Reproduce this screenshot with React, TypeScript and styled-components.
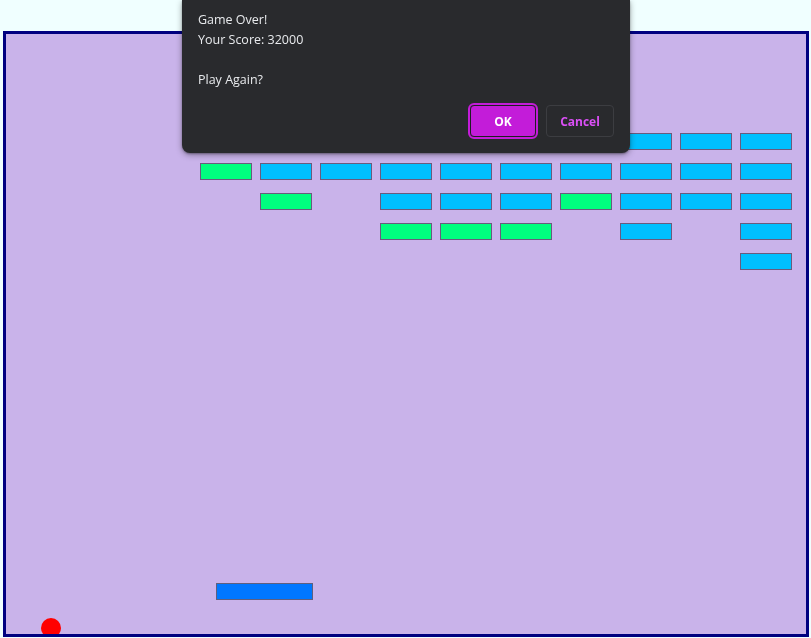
import React from "react";
import styled, { createGlobalStyle } from "styled-components";

const Global = createGlobalStyle`
  html, body { margin: 0; padding: 0; background: #f0ffff; }
  body { font-family: "Open Sans", "Noto Sans", sans-serif; }
`;

const Page = styled.div`
  width: 811px;
  height: 638px;
  display: flex;
  justify-content: center;
  padding-top: 31px;
  box-sizing: border-box;
  overflow: hidden;
`;

const Board = styled.div`
  position: relative;
  width: 800px;
  height: 600px;
  flex: none;
  border: 3px solid #000080;
  background: #c9b3ea;
  overflow: hidden;
`;

const BrickGrid = styled.div`
  display: grid;
  grid-template-columns: repeat(10, 52px);
  grid-auto-rows: 17px;
  column-gap: 8px;
  row-gap: 13px;
  padding: 99px 0 0 194px;
`;

const Brick = styled.div<{ $kind: "c" | "g" | "." }>`
  box-sizing: border-box;
  border: 1px solid ${(p) => (p.$kind === "." ? "transparent" : "#6b5a7e")};
  background: ${(p) =>
    p.$kind === "c" ? "#00bfff" : p.$kind === "g" ? "#00ff7f" : "transparent"};
`;

const Paddle = styled.div`
  position: absolute;
  left: 210px;
  top: 549px;
  width: 97px;
  height: 17px;
  box-sizing: border-box;
  border: 1px solid #5f5f7f;
  background: #0077ff;
`;

const Ball = styled.div`
  position: absolute;
  left: 35px;
  top: 584px;
  width: 20px;
  height: 20px;
  border-radius: 50%;
  background: #ff0000;
`;

const Dialog = styled.div`
  position: fixed;
  top: 0;
  left: 182px;
  width: 448px;
  height: 153px;
  box-sizing: border-box;
  background: #292a2d;
  border-radius: 0 0 8px 8px;
  box-shadow: 0 2px 6px rgba(0, 0, 0, 0.35), 0 1px 2px rgba(0, 0, 0, 0.3);
  padding: 10px 16px 16px 16px;
  display: flex;
  flex-direction: column;
  color: #e8eaed;
  font-family: "Open Sans", "Noto Sans", sans-serif;
`;

const Message = styled.div`
  font-size: 12.5px;
  line-height: 20px;
  white-space: pre-line;
  flex: 1;
`;

const Buttons = styled.div`
  display: flex;
  justify-content: flex-end;
  gap: 8px;
  align-items: center;
`;

const Button = styled.button<{ $primary?: boolean }>`
  box-sizing: border-box;
  height: 32px;
  border-radius: 4px;
  font-family: "Open Sans", "Noto Sans", sans-serif;
  font-size: 12px;
  font-weight: 700;
  cursor: pointer;
  ${(p) =>
    p.$primary
      ? `
    width: 66px;
    margin-right: 2px;
    background: #c31cd9;
    color: #ffffff;
    border: 1px solid #1f1f22;
    outline: 2px solid #c31cd9;
    outline-offset: 0px;
  `
      : `
    width: 68px;
    background: transparent;
    color: #db4ff6;
    border: 1px solid #3c3d41;
  `}
`;

const layout = [
  ".......ccc",
  "gccccccccc",
  ".g.cccgccc",
  "...ggg.c.c",
  ".........c",
];

export default function App() {
  return (
    <>
      <Global />
      <Page>
        <Board>
          <BrickGrid>
            {layout.flatMap((row, r) =>
              row.split("").map((k, c) => (
                <Brick key={`${r}-${c}`} $kind={k as "c" | "g" | "."} />
              ))
            )}
          </BrickGrid>
          <Paddle />
          <Ball />
        </Board>
      </Page>
      <Dialog>
        <Message>{"Game Over!\nYour Score: 32000\n\nPlay Again?"}</Message>
        <Buttons>
          <Button $primary>OK</Button>
          <Button>Cancel</Button>
        </Buttons>
      </Dialog>
    </>
  );
}
